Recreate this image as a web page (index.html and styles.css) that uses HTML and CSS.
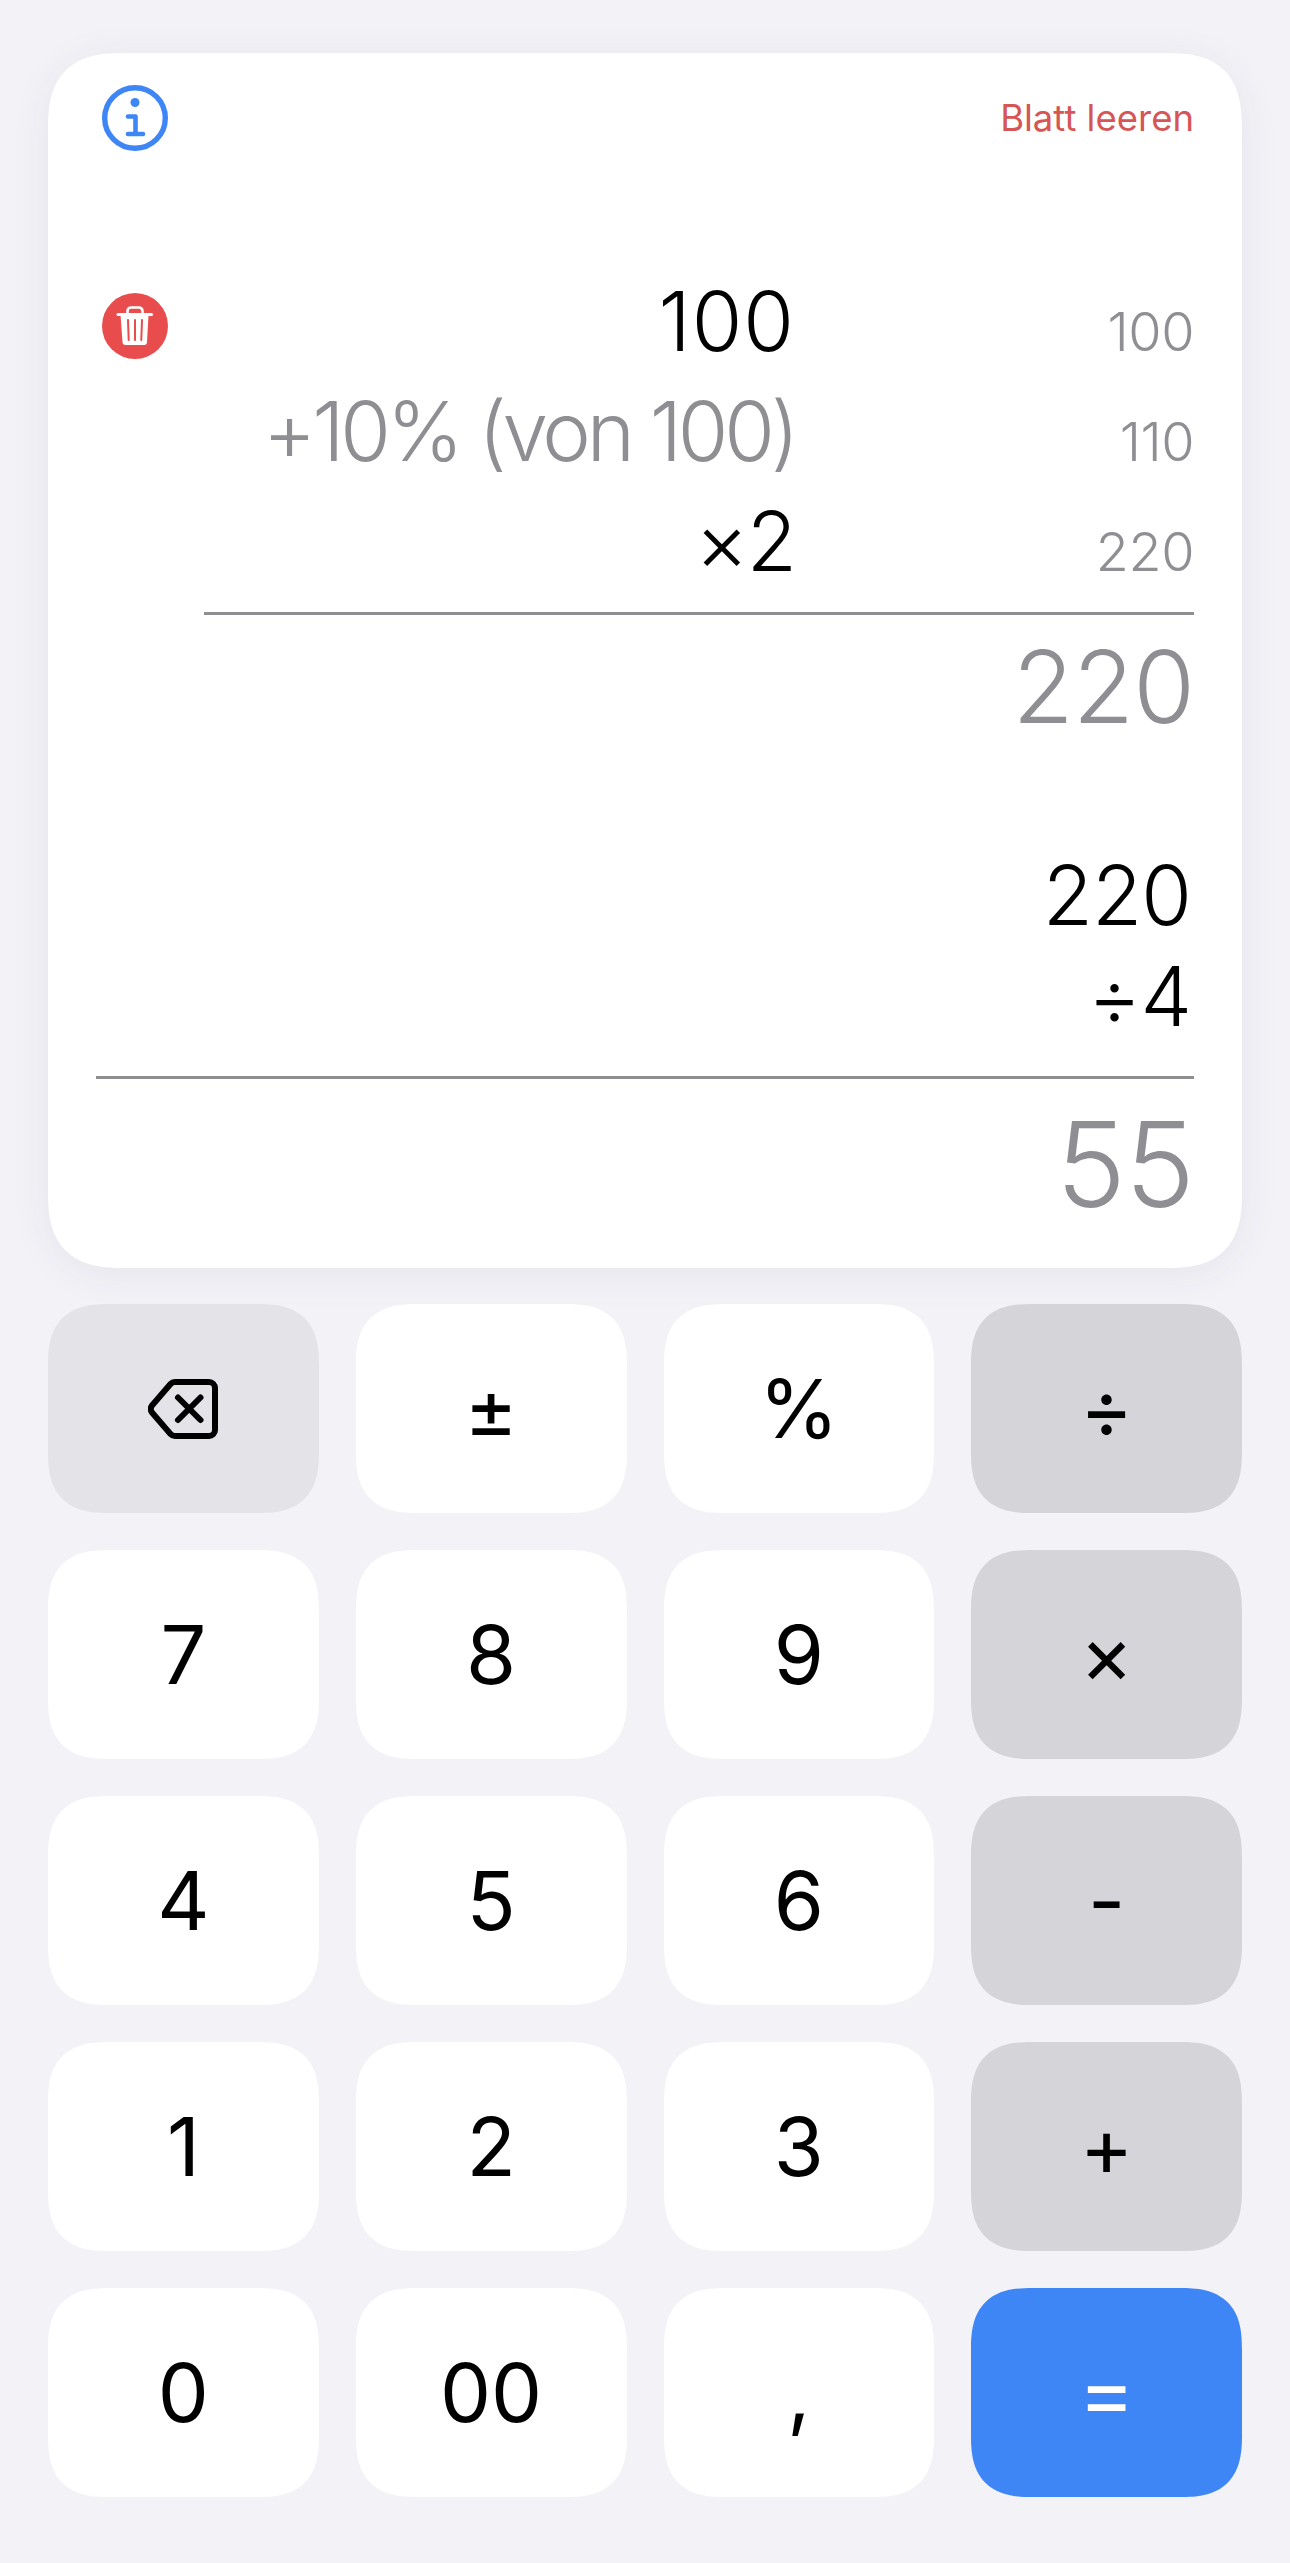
FILE: index.html
```html
<!DOCTYPE html>
<html lang="de">
<head>
  <meta charset="UTF-8" />
  <meta name="viewport" content="width=device-width, initial-scale=1.0" />
  <title>Rechner</title>
  <link rel="stylesheet" href="styles.css">
</head>
<body>
  <div class="sheet">
    <div class="sheet-head">
      <svg class="round-icon" viewBox="0 0 66 66" fill="none" stroke="#3e86f6">
        <circle cx="33" cy="33" r="30.300" stroke-width="5.400"/>
        <circle cx="33" cy="17.500" r="4.500" fill="#3e86f6" stroke="none"/>
        <path d="M26 31.500H33.500V49M26 49H41" stroke-width="4.600" stroke-linecap="round" stroke-linejoin="round"/>
      </svg>
      <span class="clear-link">Blatt leeren</span>
    </div>

    <div class="calc">
      <div class="row">
        <svg class="round-icon trash" viewBox="0 0 66 66">
          <circle cx="33" cy="33" r="33" fill="#e84c4c"/>
          <path d="M25.500 21V18a3.500 3.500 0 0 1 3.500-3.500h8a3.500 3.500 0 0 1 3.500 3.500v3" fill="none" stroke="#fff" stroke-width="2.600"/>
          <path d="M16 21.500H49.500" stroke="#fff" stroke-width="3" stroke-linecap="round"/>
          <path d="M18.500 22H46.500L45 49a3 3 0 0 1-3 3H23.500a3 3 0 0 1-3-3Z" fill="#fff"/>
          <path d="M26 27L26.700 47M33 27V47M40 27L39.300 47" stroke="#e84c4c" stroke-width="2" stroke-linecap="round"/>
        </svg>
        <span class="expr wide">100</span>
        <span class="val">100</span>
      </div>
      <div class="row">
        <span class="expr muted">+10% (von 100)</span>
        <span class="val">110</span>
      </div>
      <div class="row">
        <span class="expr">×2</span>
        <span class="val">220</span>
      </div>
      <div class="total first-total">220</div>
    </div>

    <div class="calc second">
      <div class="plain">220</div>
      <div class="plain">÷4</div>
      <div class="total last-total">55</div>
    </div>
  </div>

  <div class="keys">
    <button class="key back">
      <svg class="back-icon" viewBox="0 0 70 60" fill="none" stroke="#000" stroke-width="6" stroke-linecap="round" stroke-linejoin="round">
        <path d="M27 3H61a6 6 0 0 1 6 6V51a6 6 0 0 1-6 6H27a6 6 0 0 1-4.500-2L4 33.500a6 6 0 0 1 0-7L22.500 5a6 6 0 0 1 4.500-2Z"/>
        <path d="M30 18.500L52.500 41M52.500 18.500L30 41"/>
      </svg>
    </button>
    <button class="key">±</button>
    <button class="key">%</button>
    <button class="key op">÷</button>
    <button class="key">7</button>
    <button class="key">8</button>
    <button class="key">9</button>
    <button class="key op">×</button>
    <button class="key">4</button>
    <button class="key">5</button>
    <button class="key">6</button>
    <button class="key op">-</button>
    <button class="key">1</button>
    <button class="key">2</button>
    <button class="key">3</button>
    <button class="key op">+</button>
    <button class="key">0</button>
    <button class="key">00</button>
    <button class="key">,</button>
    <button class="key equals">=</button>
  </div>
</body>
</html>
```

FILE: styles.css
```css
body {
  font-family: Inter, 'Noto Sans', sans-serif;
  background: #f2f2f7;
  color: #000;
  margin: 0;
  padding: 53px 48px 66px;
}
.sheet {
  background: #fff;
  border-radius: 76px;
  corner-shape: superellipse(1.4);
  box-shadow: 0 6px 40px rgba(60, 60, 90, 0.07);
  height: 1215px;
  box-sizing: border-box;
  padding: 32px 48px 0 54px;
}
.sheet-head {
  display: flex;
  justify-content: space-between;
  align-items: center;
  height: 66px;
  margin-bottom: 116px;
}
.round-icon {
  display: block;
  width: 66px;
  height: 66px;
}
.clear-link {
  color: #d65555;
  font-size: 36.500px;
}
.row {
  display: grid;
  grid-template-columns: 66px 1fr 399px;
  align-items: baseline;
  height: 110px;
  line-height: 110px;
}
.trash {
  grid-column: 1;
  align-self: start;
  margin-top: 26px;
}
.expr {
  grid-column: 2;
  text-align: right;
  font-size: 82px;
  font-weight: 300;
  letter-spacing: -2px;
}
.wide {
  letter-spacing: 1px;
}
.muted {
  color: #8e8e93;
  letter-spacing: -4.200px;
}
.val {
  grid-column: 3;
  text-align: right;
  font-size: 54px;
  font-weight: 300;
  letter-spacing: -0.500px;
  color: #8e8e93;
}
.first-total {
  margin-left: 102px;
}
.total {
  border-top: 3px solid #8e8e93;
  margin-top: 15px;
  text-align: right;
  font-size: 100px;
  font-weight: 300;
  letter-spacing: -1px;
  color: #8e8e93;
  line-height: 143px;
}
.second {
  margin-top: 87px;
}
.plain {
  text-align: right;
  padding-right: 3px;
  font-size: 82px;
  font-weight: 300;
  letter-spacing: -1px;
  line-height: 101px;
}
.second .plain + .total {
  margin-top: 29px;
}
.last-total {
  margin-left: -6px;
  font-size: 118px;
  line-height: 170px;
}
.keys {
  display: grid;
  grid-template-columns: repeat(4, 1fr);
  grid-auto-rows: 209px;
  gap: 37px;
  margin-top: 36px;
}
.key {
  border: 0;
  padding: 0;
  background: #fff;
  color: #000;
  font-family: inherit;
  font-size: 81px;
  font-weight: 400;
  border-radius: 62px;
  corner-shape: superellipse(1.4);
  display: flex;
  align-items: center;
  justify-content: center;
}
.back {
  background: #e3e3e8;
}
.back-icon {
  width: 70px;
  height: 60px;
}
.op {
  background: #d4d4d9;
}
.equals {
  background: #3e86f6;
  color: #fff;
  font-size: 85px;
}
```
